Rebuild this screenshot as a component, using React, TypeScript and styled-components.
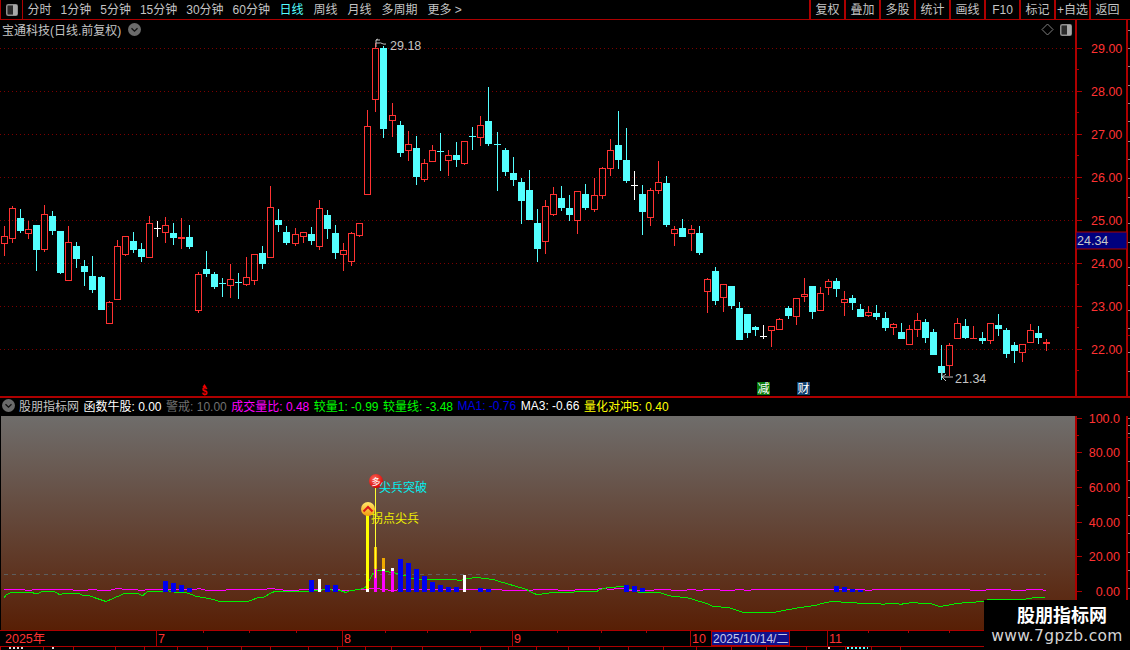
import React from "react";
import styled, { createGlobalStyle } from "styled-components";

const RED = "#ad0000";
const UP = "#ff3232";
const CY = "#54ffff";
const FONT = `"Liberation Sans", "Noto Sans CJK SC", sans-serif`;

const GlobalStyle = createGlobalStyle`
  html, body { margin: 0; padding: 0; background: #000; }
  #root { width: 1130px; height: 650px; overflow: hidden; }
`;

const Page = styled.div`
  position: relative; width: 1130px; height: 650px; background: #000; overflow: hidden;
  display: flex; flex-direction: column; font: 12px ${FONT}; color: #c4c4c4;
`;
const Toolbar = styled.div`
  flex: none; height: 19px; display: flex; align-items: stretch; border-bottom: 1px solid ${RED};
  padding-right: 6px;
`;
const PanelToggle = styled.div`
  flex: none; width: 23px; display: flex; align-items: center; justify-content: center;
  border-left: 1px solid ${RED}; border-right: 1px solid ${RED}; box-sizing: border-box;
`;
const PeriodTabs = styled.div`
  display: flex; align-items: center; padding-top: 1px;
`;
const PeriodTab = styled.span<{ $active?: boolean; $wide?: boolean }>`
  padding: 0 ${(p) => (p.$wide ? "5px" : "4.5px")}; white-space: nowrap; line-height: 18px;
  color: ${(p) => (p.$active ? "#54ffff" : "#c4c4c4")};
`;
const ToolGroup = styled.div`
  margin-left: auto; display: flex; align-items: stretch;
`;
const ToolButton = styled.div`
  width: 33px; border-left: 2px solid ${RED}; display: flex; align-items: center; justify-content: center;
  white-space: nowrap; line-height: 18px; padding-top: 1px;
`;
const Pane = styled.div<{ $h: number }>`
  position: relative; flex: none; height: ${(p) => p.$h}px; display: flex;
`;
const PlotSvg = styled.svg`
  flex: none; width: 1075px; height: 100%; display: block;
`;
const IndicatorPlot = styled.svg`
  flex: none; width: 1074px; margin-left: 1px; height: 100%; display: block;
  background: linear-gradient(180deg, #6f6d6b 0%, #581f05 100%);
`;
const AxisSvg = styled.svg`
  flex: none; width: 55px; height: 100%; display: block; overflow: visible;
`;
const TimeAxisSvg = styled.svg`
  flex: none; width: 1130px; height: 16px; display: block;
`;
const Title = styled.div`
  position: absolute; left: 2px; top: 0; height: 18px; display: flex; align-items: center; gap: 7px;
  white-space: nowrap; color: #c4c4c4;
`;
const CornerIcon = styled.div`
  position: absolute; left: 1060px; top: 4px; width: 12px; height: 12px; display: flex;
`;
const PaneDivider = styled.div`
  flex: none; height: 2px; background: ${RED};
`;
const IndicatorHeader = styled.div`
  flex: none; box-sizing: border-box; height: 18px; padding: 0 0 3px 1.5px;
  display: flex; align-items: center; gap: 4.5px; white-space: nowrap;
`;
const Readout = styled.span<{ $c: string }>`
  color: ${(p) => p.$c};
`;
const BottomTabs = styled.div`
  flex: 1; display: flex; border-top: 1px solid ${RED}; min-height: 0;
`;
const BottomTab = styled.div<{ $w: number; $pad?: number }>`
  flex: none; width: ${(p) => p.$w}px; border-left: 1px solid ${RED}; box-sizing: border-box;
  padding-left: ${(p) => p.$pad ?? 0}px;
`;
const TextCrumb = styled.div<{ $w: number; $c: string }>`
  width: ${(p) => p.$w}px; height: 2px;
  background: repeating-linear-gradient(90deg, ${(p) => p.$c} 0 2px, transparent 2px 4px);
`;
const Logo = styled.div`
  position: absolute; left: 984px; top: 600px; width: 146px; height: 50px; background: #000;
  display: flex; flex-direction: column; align-items: center; color: #fff;
`;
const LogoName = styled.div`
  margin: 3px 0 0 10px; font: 700 18px/22px "Noto Sans CJK SC", sans-serif; color: #fff;
`;
const LogoUrl = styled.div`
  margin-top: 1px; font: 400 15.5px/20px "DejaVu Sans", sans-serif; letter-spacing: .35px; color: #d4d4d4; white-space: nowrap;
`;

type K = "r" | "c" | "w" | "R";
type C = [number, number, number, number, number, K];

const seg1: C[] = [
  [13,108,139,161,198,"r"],[37,48,55,146,159,"r"],[61,57,84,123,129,"c"],[85,93,118,131,147,"r"],[109,105,105,180,243,"c"],
  [133,45,73,179,186,"r"],[157,63,78,123,135,"c"],[181,123,123,249,252,"c"],[205,108,157,272,272,"r"],[229,156,168,207,234,"c"],
  [253,210,228,246,288,"c"],[277,198,258,300,309,"c"],[304,258,261,360,360,"c"],[328,333,337,401,401,"r"],[352,150,169,329,329,"r"],
  [376,139,139,194,198,"r"],[400,126,153,180,189,"c"],[424,159,177,201,216,"c"],[448,78,100,203,203,"r"],[472,93,115,115,141,"w"],
  [496,81,106,128,159,"r"],[520,99,129,144,165,"c"],[544,84,141,147,177,"R"],[568,105,141,171,177,"c"],[595,247,253,362,369,"r"],
  [619,183,237,252,261,"c"],[643,246,252,291,297,"c"],[667,264,280,280,321,"c"],[691,222,268,287,324,"r"],[715,249,277,277,327,"c"],
  [739,201,262,284,288,"r"],[763,193,193,272,285,"r"],[787,168,189,222,237,"c"],[811,-12,52,203,203,"r"],[835,57,90,105,126,"c"],
  [859,108,126,159,165,"c"],[886,114,133,161,168,"r"],[910,126,127,140,159,"r"],[934,111,132,153,165,"c"],[958,30,55,170,180,"r"],
  [982,60,75,117,147,"c"],[1006,105,129,189,207,"c"],[1030,159,181,194,243,"r"],[1054,126,130,215,228,"r"],[1078,100,100,137,141,"r"],
];
const seg2: C[] = [
  [82,240,289,494,494,"r"],[106,40,55,209,245,"r"],[130,48,55,297,324,"c"],[157,219,256,272,321,"r"],[181,273,285,369,381,"c"],
  [205,304,343,362,393,"r"],[229,318,354,441,465,"c"],[253,387,400,449,456,"r"],[277,346,361,395,395,"r"],[301,309,364,364,423,"c"],
  [325,360,376,392,438,"r"],[349,336,375,390,411,"c"],[373,334,334,402,405,"r"],[397,291,319,319,360,"c"],[421,258,286,323,348,"r"],
  [445,171,273,342,348,"c"],[472,306,343,343,483,"c"],[496,354,360,426,438,"c"],[520,381,429,450,468,"c"],[544,444,456,513,582,"c"],
  [568,420,480,570,570,"c"],[592,537,579,657,696,"c"],[616,510,529,635,672,"r"],[640,471,493,554,557,"r"],[664,468,504,534,543,"c"],
  [688,495,534,555,573,"c"],[712,484,484,572,612,"r"],[736,462,492,534,540,"c"],[763,444,496,539,546,"r"],[787,411,415,497,507,"r"],
  [811,327,361,416,438,"r"],[835,243,345,390,417,"c"],[859,294,390,453,459,"c"],[883,423,466,466,510,"w"],[907,465,492,546,615,"c"],
  [931,474,481,563,588,"r"],[955,393,457,482,492,"r"],[979,438,459,585,591,"c"],[1003,588,598,611,648,"r"],[1027,567,594,621,621,"c"],
  [1054,585,598,611,663,"r"],[1078,588,609,669,675,"c"],
];
const seg3: C[] = [
  [52,204,208,245,309,"r"],[76,171,183,273,285,"c"],[100,222,223,263,306,"r"],[124,228,228,288,297,"c"],[148,277,294,390,390,"c"],
  [172,312,312,369,384,"c"],[196,348,351,360,378,"c"],[220,345,378,378,387,"w"],[244,348,349,364,411,"r"],[268,325,328,359,359,"r"],
  [295,288,294,318,327,"c"],[319,265,265,320,345,"r"],[343,204,251,260,276,"r"],[367,228,228,306,327,"c"],[391,232,250,302,302,"r"],
  [415,208,214,235,255,"r"],[439,204,213,237,261,"c"],[463,243,268,278,318,"r"],[487,255,264,279,300,"c"],[511,282,297,321,321,"c"],
  [535,288,307,319,321,"r"],[559,285,309,321,330,"c"],[586,306,324,354,363,"c"],[610,339,343,353,375,"r"],[634,339,366,387,387,"c"],
  [658,345,358,404,404,"r"],[682,309,331,359,381,"r"],[706,327,336,384,399,"c"],[730,357,366,435,435,"c"],[754,405,468,489,510,"c"],
  [778,400,406,467,498,"r"],[802,324,340,386,387,"r"],[826,327,348,384,387,"c"],[850,348,384,386,388,"R"],[877,366,384,393,402,"c"],
  [901,340,340,392,402,"r"],[925,312,345,357,378,"c"],[949,354,360,432,444,"c"],[973,396,405,423,459,"c"],[997,402,403,428,456,"r"],
  [1021,342,361,398,399,"r"],[1045,348,369,384,402,"c"],[1069,387,397,403,423,"r"],
];

const Candle = ({ d, xo, yo }: { d: C; xo: number; yo: number }) => {
  const [x, hi, top, bot, lo, k] = d;
  const X = Math.floor(xo + x / 3);
  const Y = (v: number) => Math.round(yo + v / 3);
  const color = k === "c" ? CY : k === "w" ? "#ffffff" : UP;
  const h = Y(hi), t = Y(top), b = Y(bot), l = Y(lo);
  if (k === "r") {
    return (
      <g>
        {h < t && <rect x={X} y={h} width={1} height={t - h} fill={color} />}
        {l > b && <rect x={X} y={b} width={1} height={l - b} fill={color} />}
        <rect x={X - 2.5} y={t + 0.5} width={6} height={Math.max(b - t - 1, 1)} fill="none" stroke={color} />
      </g>
    );
  }
  return (
    <g>
      <rect x={X} y={h} width={1} height={Math.max(l - h, 1)} fill={color} />
      <rect x={X - 3} y={t} width={7} height={Math.max(b - t, 1)} fill={color} />
    </g>
  );
};

const priceCandles = [
  ...seg1.map((d, i) => <Candle key={"a" + i} d={d} xo={0} yo={190} />),
  ...seg2.map((d, i) => <Candle key={"b" + i} d={d} xo={340} yo={30} />),
  ...seg3.map((d, i) => <Candle key={"c" + i} d={d} xo={690} yo={210} />),
];

const gridYs = [48, 91, 134, 177, 220, 263, 306, 349];

const mag = (xo: number, pts: [number, number, number][]) =>
  pts.map(([a, b, y]) => `M${xo + a / 3} ${Math.round(570 + y / 3) + 0.5}H${xo + b / 3}`).join("");
const magentaPath =
  mag(0, [[12,75,58],[75,96,61],[96,220,58],[220,264,61],[264,290,58],[290,332,61],[332,345,58],[345,366,55],[366,414,58],[414,435,61],[435,590,58],[590,603,55],[603,615,58],[615,678,61],[678,800,58],[800,825,55],[825,850,58],[850,898,61],[898,1020,58],[1020,1050,61]]) +
  mag(350, [[0,15,61],[15,55,58],[55,90,55],[90,115,58],[115,140,61],[140,456,58],[456,548,61],[548,625,58],[625,675,61],[675,744,58],[744,771,55],[771,792,58],[792,822,55],[822,885,60],[885,912,61],[912,963,58],[963,1011,61],[1011,1038,58],[1038,1050,61]]) +
  mag(700, [[0,10,61],[10,60,58],[60,105,61],[105,132,58],[132,153,61],[153,495,58],[495,516,61],[516,810,58],[810,858,61],[858,933,58],[933,978,61],[978,1029,58],[1029,1038,61]]);

const greenPts: [number, number][] = [
  ...([[12,80],[20,72],[34,67],[100,67],[100,70],[114,70],[126,64],[162,64],[178,72],[192,70],[238,70],[250,76],[266,76],[282,82],[300,88],[318,92],[332,88],[345,80],[360,74],[372,70],[412,70],[428,74],[444,64],[484,64],[500,58],[510,64],[534,67],[558,67],[574,72],[590,78],[610,82],[628,85],[640,88],[658,92],[744,92],[760,86],[774,82],[790,80],[810,68],[824,64],[898,64],[898,62],[960,60],[970,56],[1020,60]] as [number, number][]).map(([x, y]) => [x / 3, 570 + y / 3] as [number, number]),
  [346,591.7],[350,590],[360,588.7],[365,587],[373,573],[378,570],[393,571.7],[405,575],[412,578],[420,579.3],[453,579.3],[460,580],[468,578.3],[477,577.3],[493,579],[503,581.7],[520,586.7],
  ...([[530,58],[545,66],[560,73],[590,70],[605,65],[650,65],[665,67],[680,62],[695,62],[740,64],[750,58],[775,50],[820,49],[830,54],[870,66],[915,67],[930,65],[945,72],[970,78],[1010,82],[1030,86],[1050,92]] as [number, number][]).map(([x, y]) => [350 + x / 3, 570 + y / 3] as [number, number]),
  ...([[20,100],[40,108],[85,110],[105,116],[130,127],[220,127],[250,120],[300,110],[345,105],[365,100],[395,94],[420,94],[425,97],[470,97],[472,100],[540,100],[545,103],[565,100],[595,100],[600,103],[615,100],[640,97],[665,100],[690,100],[720,108],[740,106],[770,98],[805,97],[850,94],[865,88],[905,88],[972,88],[985,85],[1005,82],[1035,82]] as [number, number][]).map(([x, y]) => [700 + x / 3, 570 + y / 3] as [number, number]),
];
const greenLine = greenPts.map(([x, y]) => `${x.toFixed(1)},${Math.round(y) + 0.5}`).join(" ");

type Bar = [number, number, string, number];
const BLUE = "#0000f0";
const bars: Bar[] = [
  [163,581,BLUE,5],[171,583,BLUE,5],[179,585,BLUE,5],[187,588,BLUE,5],[309,580,BLUE,5],[318,579,"#fff",3],[325,585,BLUE,5],[333,585,BLUE,5],
  [398,559,BLUE,5],[406,563,BLUE,5],[414,569,BLUE,5],[422,576,BLUE,5],[430,582,BLUE,5],[438,585,BLUE,5],[446,587,BLUE,5],[454,587,BLUE,5],
  [463,575,"#fff",3],[478,588,BLUE,5],[486,589,BLUE,5],[624,585,BLUE,5],[632,586,BLUE,5],[640,588,BLUE,5],[834,586,BLUE,5],[842,587,BLUE,5],[850,589,BLUE,5],[858,590,BLUE,5],
];

const majorPrice = [25, 24, 23, 22, 29, 28, 27, 26];

const PriceAxis = () => (
  <AxisSvg viewBox="1075 20 55 376">
    <rect x={1075} y={20} width={2} height={376} fill={RED} />
    <rect x={1126} y={20} width={2} height={376} fill={RED} />
    {majorPrice.map((p) => {
      const y = 48 + (29 - p) * 43;
      return (
        <g key={p}>
          <rect x={1077} y={y} width={5} height={1} fill={RED} />
          <rect x={1077} y={y + 21} width={2} height={1} fill={RED} />
          <text x={1091} y={y + 5} fill={UP} fontSize={12.5} fontFamily="Liberation Sans">{p.toFixed(2)}</text>
        </g>
      );
    })}
    {[30, 48, 66, 85, 103, 121, 141, 159, 178, 197, 223, 242, 267, 285, 310, 328, 352, 371].map((y) => (
      <rect key={y} x={1128} y={y} width={2} height={1} fill="#8a8a8a" />
    ))}
    <rect x={1128} y={335} width={2} height={1} fill={RED} />
    <rect x={1076} y={232} width={51} height={17} fill="#00007e" stroke={RED} />
    <text x={1077} y={245} fill="#c8c8c8" fontSize={12.5} fontFamily="Liberation Sans">24.34</text>
  </AxisSvg>
);

const IndicatorAxis = () => (
  <AxisSvg viewBox="1075 416 55 214">
    <rect x={1075} y={416} width={2} height={214} fill={RED} />
    <rect x={1126} y={416} width={2} height={214} fill={RED} />
    {[[100, 418, "100.0"], [80, 452, "80.00"], [60, 487, "60.00"], [40, 522, "40.00"], [20, 556, "20.00"], [0, 591, "0.00"]].map(([k, y, t]) => (
      <g key={k as number}>
        <rect x={1077} y={y as number} width={5} height={1} fill={RED} />
        <text x={1120} y={(y as number) + 5} textAnchor="end" fill={UP} fontSize={12.5} fontFamily="Liberation Sans">{t}</text>
      </g>
    ))}
    {[435, 470, 505, 539, 574].map((y) => <rect key={y} x={1077} y={y} width={2} height={1} fill={RED} />)}
    <rect x={1128} y={437} width={2} height={1} fill={RED} />
    {[418, 425, 433, 461, 480, 497, 515, 533, 552, 570, 588].map((y) => (
      <rect key={y} x={1128} y={y} width={2} height={1} fill="#8a8a8a" />
    ))}
  </AxisSvg>
);

const LayoutIcon = () => (
  <svg width="12" height="12" viewBox="0 0 12 12">
    <rect x=".75" y=".75" width="10.5" height="10.5" rx="1.5" fill="#2a2a2a" stroke="#8e8e8e" strokeWidth="1.5" />
    <rect x="7" y="1" width="4" height="10" fill="#a8a8a8" />
  </svg>
);

const ChevronCircle = () => (
  <svg width="13" height="13" viewBox="0 0 13 13">
    <circle cx="6.5" cy="6.5" r="6.5" fill="#6b6b6b" />
    <path d="M3.5 5.2 L6.5 8.2 L9.5 5.2" fill="none" stroke="#111" strokeWidth="1.3" />
  </svg>
);

const timeTicks = [203, 249, 296, 385, 427, 470, 557, 601, 646, 868, 908, 949];
const timeSeps: [number, string][] = [[156, "7"], [342, "8"], [512, "9"], [690, "10"], [827, "11"]];
const tabEdges = [0, 43, 73, 115, 144, 177, 207, 241, 270, 308, 337, 365, 391, 422, 480, 508, 536, 568, 599, 628, 663, 696, 731, 766, 806, 845, 871, 900, 940];
const crumbs: Record<number, { pad: number; w: number; c: string }> = {
  0: { pad: 8, w: 14, c: "#ddd" },
  43: { pad: 8, w: 2, c: "#ddd" },
  806: { pad: 21, w: 2, c: "#ddd" },
  845: { pad: 1, w: 21, c: "#54ffff" },
};

export default function App() {
  return (
    <Page>
      <GlobalStyle />
      <Toolbar>
        <PanelToggle><LayoutIcon /></PanelToggle>
        <PeriodTabs>
          {["分时", "1分钟", "5分钟", "15分钟", "30分钟", "60分钟"].map((t) => <PeriodTab key={t}>{t}</PeriodTab>)}
          <PeriodTab $active $wide>日线</PeriodTab>
          {["周线", "月线", "多周期", "更多 >"].map((t) => <PeriodTab key={t} $wide>{t}</PeriodTab>)}
        </PeriodTabs>
        <ToolGroup>
          {["复权", "叠加", "多股", "统计", "画线", "F10", "标记", "+自选", "返回"].map((t) => <ToolButton key={t}>{t}</ToolButton>)}
        </ToolGroup>
      </Toolbar>

      <Pane $h={376}>
        <PlotSvg viewBox="0 20 1075 376">
          {gridYs.map((y) => (
            <line key={y} x1={0} x2={1075} y1={y + 0.5} y2={y + 0.5} stroke="#7c0000" strokeDasharray="1 3" />
          ))}
          <g shapeRendering="crispEdges">{priceCandles}</g>
          <path d="M376 47V40H380M376 40l2 -1M376 43h3c2 -1 4 2 7 1" fill="none" stroke="#c0c0c0" />
          <text x={390} y={50} fill="#c4c4c4" fontSize={12.5} fontFamily="Liberation Sans">29.18</text>
          <path d="M942 377H953M942 377l4 -3M942 377l4 4M942 370v7" fill="none" stroke="#c0c0c0" />
          <text x={955} y={383} fill="#c4c4c4" fontSize={12.5} fontFamily="Liberation Sans">21.34</text>
          <path d="M204.5 384l2 3h-4z" fill="#f00000" />
          <text x={204.5} y={395} textAnchor="middle" fill="#f00000" fontSize={10} fontWeight={700} fontFamily="Liberation Sans">$</text>
          <rect x={757} y={382} width={13} height={13} fill="#0a7a0a" />
          <text x={763.5} y={393} textAnchor="middle" fill="#fff" fontSize={12} fontFamily="Noto Sans CJK SC">减</text>
          <rect x={797} y={382} width={13} height={13} fill="#0f3f6e" />
          <text x={803.5} y={393} textAnchor="middle" fill="#fff" fontSize={12} fontFamily="Noto Sans CJK SC">财</text>
          <path d="M1042 29.5L1047.5 24L1053 29.5L1047.5 35Z" fill="none" stroke="#808080" />
        </PlotSvg>
        <PriceAxis />
        <Title>宝通科技(日线.前复权)<ChevronCircle /></Title>
        <CornerIcon><LayoutIcon /></CornerIcon>
      </Pane>
      <PaneDivider />
      <IndicatorHeader>
        <ChevronCircle />
        <Readout $c="#c4c4c4">股朋指标网</Readout>
        <Readout $c="#ffffff">函数牛股: 0.00</Readout>
        <Readout $c="#707070">警戒: 10.00</Readout>
        <Readout $c="#ff00ff">成交量比: 0.48</Readout>
        <Readout $c="#00ff00">较量1: -0.99</Readout>
        <Readout $c="#00ff00">较量线: -3.48</Readout>
        <Readout $c="#0000e6">MA1: -0.76</Readout>
        <Readout $c="#ffffff">MA3: -0.66</Readout>
        <Readout $c="#ffff00">量化对冲5: 0.40</Readout>
      </IndicatorHeader>

      <Pane $h={214}>
        <IndicatorPlot viewBox="1 416 1074 214">
          <defs>
            <radialGradient id="redBall" cx=".4" cy=".35" r=".7">
              <stop offset="0" stopColor="#ff6a5a" />
              <stop offset="1" stopColor="#d40000" />
            </radialGradient>
            <linearGradient id="goldBall" x1="0" y1="0" x2="0" y2="1">
              <stop offset="0" stopColor="#ffe96a" />
              <stop offset="1" stopColor="#f29a10" />
            </linearGradient>
          </defs>
          <line x1={4} x2={1046} y1={574.5} y2={574.5} stroke="#5e5e5e" strokeDasharray="4 4" />
          <g shapeRendering="crispEdges">
            <path d={magentaPath} fill="none" stroke="#ff00ff" />
            <polyline points={greenLine} fill="none" stroke="#00f000" />
            {bars.map(([x, top, c, w]) => <rect key={x} x={x} y={top} width={w} height={592 - top} fill={c} />)}
            <rect x={366} y={515} width={3} height={74} fill="#ffff00" />
            <rect x={366} y={589} width={3} height={3} fill="#fff" />
            <rect x={374} y={547} width={3} height={22} fill="#f2c000" />
            <rect x={374} y={569} width={3} height={23} fill="#ff00ff" />
            <rect x={375} y={488} width={1} height={90} fill="#ffff30" />
            <rect x={382} y={558} width={3} height={11} fill="#f0a800" />
            <rect x={382} y={569} width={3} height={2} fill="#fff" />
            <rect x={382} y={571} width={3} height={21} fill="#ff00ff" />
            <rect x={391} y={568} width={3} height={3} fill="#fff" />
            <rect x={391} y={571} width={3} height={21} fill="#ff00ff" />
          </g>
          <circle cx={376} cy={481} r={7} fill="url(#redBall)" />
          <text x={376} y={485} textAnchor="middle" fill="#fff" fontSize={9} fontFamily="Noto Sans CJK SC">多</text>
          <text x={379} y={492} fill="#00f0f0" fontSize={12} fontFamily="Noto Sans CJK SC">尖兵突破</text>
          <circle cx={368} cy={509} r={7} fill="url(#goldBall)" />
          <path d="M363.5 511.5 L368 507 L372.5 511.5" fill="none" stroke="#d81818" strokeWidth="2" />
          <text x={371} y={523} fill="#f0f000" fontSize={12} fontFamily="Noto Sans CJK SC">拐点尖兵</text>
        </IndicatorPlot>
        <IndicatorAxis />
      </Pane>

      <TimeAxisSvg viewBox="0 630 1130 16">
        <rect x={0} y={630} width={1130} height={1} fill={RED} />
        {timeTicks.map((x) => <rect key={x} x={x} y={631} width={1} height={2} fill={RED} />)}
        <text x={5} y={643} fill={UP} fontSize={12.5} fontFamily="Liberation Sans, Noto Sans CJK SC">2025年</text>
        {timeSeps.map(([x, t]) => (
          <g key={x}>
            <rect x={x} y={631} width={1} height={15} fill={RED} />
            <text x={x + 2} y={643} fill={UP} fontSize={12.5} fontFamily="Liberation Sans">{t}</text>
          </g>
        ))}
        <rect x={711.5} y={631.5} width={78} height={14} fill="#10108c" stroke={RED} />
        <text x={713} y={643} fill="#c8c8e8" fontSize={12} fontFamily="Liberation Sans, Noto Sans CJK SC">2025/10/14/二</text>
      </TimeAxisSvg>
      <BottomTabs>
        {tabEdges.slice(1).map((e, i) => {
          const c = crumbs[tabEdges[i]];
          return (
            <BottomTab key={e} $w={e - tabEdges[i]} $pad={c?.pad}>
              {c && <TextCrumb $w={c.w} $c={c.c} />}
            </BottomTab>
          );
        })}
      </BottomTabs>

      <Logo>
        <LogoName>股朋指标网</LogoName>
        <LogoUrl>www.7gpzb.com</LogoUrl>
      </Logo>
    </Page>
  );
}
